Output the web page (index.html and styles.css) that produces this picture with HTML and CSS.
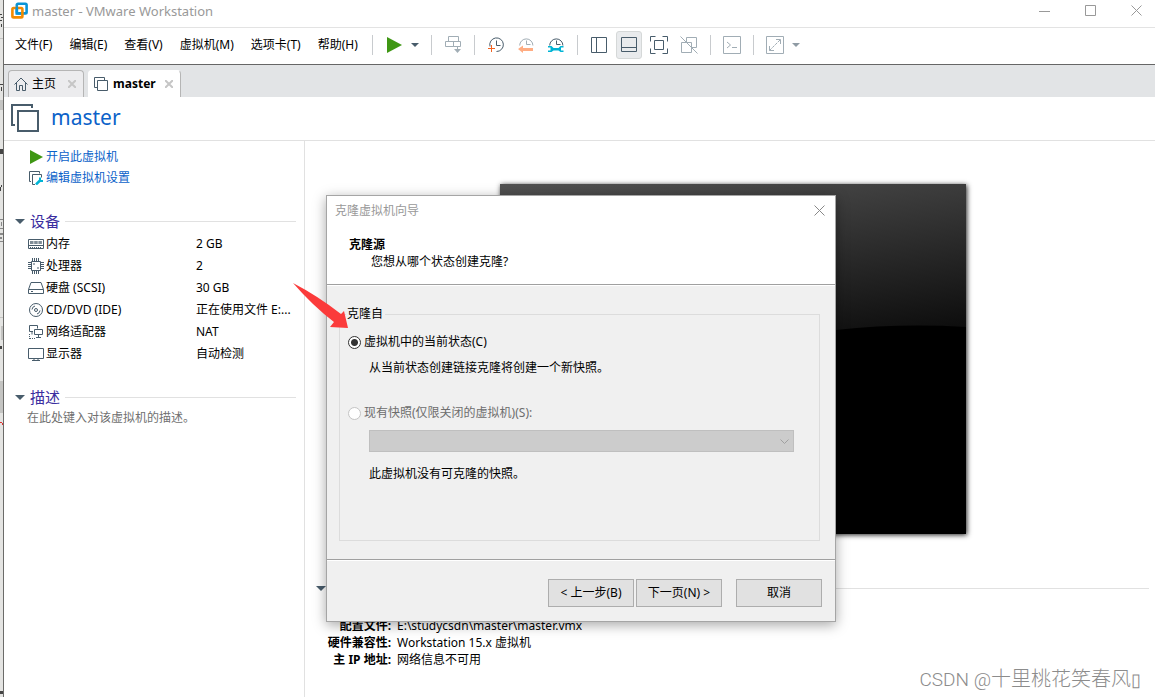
FILE: index.html
```html
<!DOCTYPE html>
<html lang="zh-CN">
<head>
<meta charset="utf-8">
<title>master - VMware Workstation</title>
<link rel="stylesheet" href="styles.css">
</head>
<body>
<div class="desktop">
  <div class="backdrop">
    <svg width="3" height="697" viewBox="0 0 3 697" shape-rendering="crispEdges">
      <path fill="#c4c4c2" d="M0 38h3v1h-3zM0 100h3v10h-3zM0 317h3v1h-3zM1 326h2v14h-2zM0 381h3v32h-3z"/>
      <path fill="#444" d="M0 149h3v5h-3zM0 14h2v1h-2zM1 17h2v1h-2zM0 20h2v1h-2zM1 24h1v3h-1zM0 84h3v1h-3zM1 87h1v4h-1zM0 187h1v4h-1zM1 185h1v2h-1zM0 346h2v3h-2zM0 691h3v3h-3z"/>
      <path fill="#888" d="M0 219h3v1h-3zM1 222h1v4h-1zM0 228h3v1h-3zM0 233h3v2h-3zM0 237h2v2h-2zM0 241h3v1h-3z"/>
      <path fill="#d33" d="M0 422h2v1h-2zM2 423h1v2h-1z"/>
    </svg>
  </div>
  <div class="app">
    <header class="titlebar">
      <svg class="logo" width="18" height="18" viewBox="0 0 18 18" fill="none" stroke-width="2.6">
        <rect x="5.8" y="1.8" width="9.8" height="9.6" rx="1.2" stroke="#0a94d6"/>
        <rect x="1.4" y="6" width="10" height="9.4" rx="1.2" stroke="#f38b00"/>
        <path d="M5.8 5v6.4h4" stroke="#0a94d6"/>
      </svg>
      <h1 class="window-title">master - VMware Workstation</h1>
      <div class="window-controls">
        <button aria-label="最小化"><svg width="12" height="12"><path d="M0 6.500h11"/></svg></button>
        <button aria-label="最大化"><svg width="12" height="12"><path d="M.5.500h10v10h-10z"/></svg></button>
        <button aria-label="关闭"><svg width="12" height="12"><path d="M.5.500l10 10m0-10l-10 10"/></svg></button>
      </div>
    </header>
    <div class="menubar">
      <nav class="menus">
        <button>文件(F)</button><button>编辑(E)</button><button>查看(V)</button><button>虚拟机(M)</button><button>选项卡(T)</button><button>帮助(H)</button>
      </nav>
      <div class="group tight">
        <button class="tool" aria-label="开启"><svg width="16" height="16"><path d="M1 0l15 8-15 8z" fill="#3f9714"/></svg></button>
        <button class="caret" aria-label="电源选项"><svg width="8" height="4"><path d="M0 0h8l-4 4z" fill="#485c6b"/></svg></button>
      </div>
      <div class="group">
        <button class="tool pale" aria-label="发送"><svg width="18" height="18"><path d="M4.500.500h10v5h-10zM1.500 5.500h8v5h-8zM9.500 5.500h7v5h-7zM13.500 10v5"/><path d="M10 13h7l-3.500 4z" fill="#a1adb5" stroke="none"/></svg></button>
      </div>
      <div class="group">
        <button class="tool" aria-label="拍摄快照"><svg width="18" height="18"><path d="M3 10.500a6.800 6.800 0 1 1 6.500 5M9.500 4.500v5h4"/><path d="M1 12.500h7M4.500 9v7" stroke="#f26322"/></svg></button>
        <button class="tool pale" aria-label="恢复快照"><svg width="18" height="18"><path d="M2.700 9.500a6.600 6.600 0 1 1 13.200 0M9.500 4.500v4h4"/><path d="M1 13l5-3.500v2.500h10v3h-10v2z" fill="#ffac82" stroke="none"/></svg></button>
        <button class="tool" aria-label="管理快照"><svg width="18" height="18"><path d="M2.700 9.500a6.600 6.600 0 1 1 13.200 0M9.500 4.500v4h4"/><path d="M1 10h3.500l2 2h5l2-2h3v1.500h-2.500v3h2.500v1.500h-3l-2-1.500h-5l-2 1.500h-3.500v-1.500h2.500v-3h-2.500z" fill="#00b4d5" stroke="none"/></svg></button>
      </div>
      <div class="group">
        <button class="tool" aria-label="显示库"><svg width="18" height="18"><path d="M1.500 1.500h15v15h-15zM6.500 1.500v15"/></svg></button>
        <button class="tool active" aria-label="缩略图栏"><svg width="18" height="18"><path d="M1.500 1.500h15v14h-15zM1.500 11.500h15"/></svg></button>
        <button class="tool" aria-label="全屏"><svg width="18" height="18"><path d="M.500 5.500v-5h5M12.500.500h5v5M17.500 12.500v5h-5M5.500 17.500h-5v-5M4.500 4.500h9v9h-9z"/></svg></button>
        <button class="tool pale" aria-label="Unity"><svg width="18" height="18"><path d="M6.500 1.500h10v10h-5M1.500 6.500h10v10h-10zM6.500 1.500v5M.500.500l17 17"/></svg></button>
      </div>
      <div class="group">
        <button class="tool pale" aria-label="控制台"><svg width="18" height="18"><path d="M.500.500h17v17h-17zM4 6l3.500 3-3.500 3M9 11.500h5"/></svg></button>
      </div>
      <div class="group tight">
        <button class="tool pale" aria-label="拉伸"><svg width="18" height="18"><path d="M.500.500h17v17h-17z"/><path d="M3.500 14.500l11-11" stroke-dasharray="3 1"/><path d="M10 3.500h4.500v4.500M3.500 10v4.500h4.500"/></svg></button>
        <button class="caret" aria-label="拉伸选项"><svg width="8" height="4"><path d="M0 0h8l-4 4z" fill="#8f9ba4"/></svg></button>
      </div>
    </div>
    <div class="tabs">
      <div class="tab">
        <svg width="14" height="14"><path d="M.500 7.500l6.500-6.500 6.500 6.500M2.500 6v7.500h3v-5h3v5h3v-7.500"/></svg>
        <span>主页</span><button aria-label="关闭主页"><svg width="8" height="8"><path d="M0 0l8 8m0-8l-8 8"/></svg></button>
      </div>
      <div class="tab current">
        <svg width="14" height="14"><path d="M3 10.500h-2.500v-10h10v2.500M3.500 3.500h10v10h-10z"/></svg>
        <span>master</span><button aria-label="关闭 master"><svg width="8" height="8"><path d="M0 0l8 8m0-8l-8 8"/></svg></button>
      </div>
    </div>
    <div class="vm-header">
      <svg width="28" height="28" fill="none" stroke="#485c6b" stroke-width="2"><path d="M4 21H1V1h20v3M7 7h20v20H7z"/></svg>
      <h2>master</h2>
    </div>
    <div class="content">
      <aside class="sidebar">
        <div class="actions">
          <a href="#"><svg width="16" height="14"><path d="M2 0l13 7-13 7z" fill="#3f9714"/></svg>开启此虚拟机</a>
          <a href="#"><svg width="16" height="14" fill="none" stroke="#485c6b"><path d="M3 10.500H1.500v-10h10v2M7 13.500H4.500v-10h9v3"/><path d="M8 13.500l4-4" stroke="#00b4d5" stroke-width="2.500"/><path d="M12 6.500v3.500h3" stroke="#00b4d5" stroke-width="2"/></svg>编辑虚拟机设置</a>
        </div>
        <section>
          <h3><svg width="10" height="5"><path d="M0 0h10l-5 5z" fill="#485c6b"/></svg>设备</h3>
          <dl class="devices">
            <div><dt><svg width="16" height="16"><path d="M.500 3.500h15v9h-15zM1 9.500h14"/><path d="M2 6.500h12" stroke-width="3" stroke-dasharray="3.500 .7" opacity=".7"/><path d="M2 11.500h12" stroke-dasharray="1 1"/></svg>内存</dt><dd>2 GB</dd></div>
            <div><dt><svg width="16" height="16"><path d="M3.500 3.500h9v9h-9z"/><path d="M4 1.500h8M4 14.500h8M1.500 4v8M14.500 4v8" stroke-width="3" stroke-dasharray="1 1"/><path d="M5 6h2M9 10h2"/></svg>处理器</dt><dd>2</dd></div>
            <div><dt><svg width="16" height="16"><path d="M3 2.500h10l2.500 7v4h-15v-4zM.500 9.500h15M3 11.500h2"/></svg>硬盘 (SCSI)</dt><dd>30 GB</dd></div>
            <div><dt><svg width="16" height="16"><circle cx="8" cy="8" r="6.500"/><circle cx="8" cy="8" r="1.500"/><path d="M4 7.500a4 4 0 0 1 3-3.500M12 8.500a4 4 0 0 1-3 3.500"/></svg>CD/DVD (IDE)</dt><dd>正在使用文件 E:...</dd></div>
            <div><dt><svg width="16" height="16"><path d="M5 7.500H1.500v-6h8v3M6.500 5.500h8v5h-8zM4 7.500v3M10.500 10.500v3M8 13.500h5"/><path d="M1.500 10v5M2 14.500h6" stroke-dasharray="1 1"/></svg>网络适配器</dt><dd>NAT</dd></div>
            <div><dt><svg width="16" height="16"><path d="M.500 2.500h15v10h-15zM6 13v1.500M4 14.500h8M10 13v1.500"/></svg>显示器</dt><dd>自动检测</dd></div>
          </dl>
        </section>
        <section>
          <h3><svg width="10" height="5"><path d="M0 0h10l-5 5z" fill="#485c6b"/></svg>描述</h3>
          <p class="hint">在此处键入对该虚拟机的描述。</p>
        </section>
      </aside>
      <main class="main">
        <svg class="screen" viewBox="0 0 466 350">
          <defs><linearGradient id="sheen" x1="0" y1="0" x2=".35" y2="1"><stop offset="0" stop-color="#525252"/><stop offset="1" stop-color="#0c0c0c"/></linearGradient></defs>
          <path d="M0 0h466v350H0z"/>
          <path d="M0 0h466v143Q400 139 336 146L0 190z" fill="url(#sheen)"/>
        </svg>
        <div class="details-head"><svg width="10" height="5"><path d="M0 0h10l-5 5z" fill="#485c6b"/></svg></div>
        <dl class="details">
          <dt>配置文件:</dt><dd>E:\studycsdn\master\master.vmx</dd>
          <dt>硬件兼容性:</dt><dd>Workstation 15.x 虚拟机</dd>
          <dt>主 IP 地址:</dt><dd>网络信息不可用</dd>
        </dl>
      </main>
    </div>
  </div>

  <form class="dialog" role="dialog" aria-labelledby="wizard-title">
    <div class="dialog-head">
      <div class="dialog-title"><span id="wizard-title">克隆虚拟机向导</span>
        <button type="button" aria-label="关闭"><svg width="11" height="11"><path d="M.500.500l10 10m0-10l-10 10"/></svg></button></div>
      <h4>克隆源</h4>
      <p>您想从哪个状态创建克隆?</p>
    </div>
    <div class="dialog-body">
      <fieldset>
        <legend>克隆自</legend>
        <label><input type="radio" name="source" checked>虚拟机中的当前状态(C)</label>
        <p class="note">从当前状态创建链接克隆将创建一个新快照。</p>
        <label class="off"><input type="radio" name="source" disabled>现有快照(仅限关闭的虚拟机)(S):</label>
        <div class="select-wrap">
          <select disabled aria-label="现有快照"><option></option></select>
          <svg width="9" height="6"><path d="M.500.500l4 4 4-4"/></svg>
        </div>
        <p class="note">此虚拟机没有可克隆的快照。</p>
      </fieldset>
    </div>
    <div class="dialog-foot">
      <button type="button">&lt; 上一步(B)</button>
      <button type="button">下一页(N) &gt;</button>
      <button type="button" class="cancel">取消</button>
    </div>
  </form>

  <svg class="arrow" width="56" height="46" viewBox="0 0 56 46"><path d="M0 0Q25 13 48 31l3-3 4 17-18-1 4-5Q20 23 0 0z" fill="#fb3b3b"/></svg>
  <div class="watermark"><span class="latin">CSDN @</span>十里桃花笑春风<span class="box">▯</span></div>
</div>
</body>
</html>
```
FILE: styles.css
```css
* { box-sizing: border-box; }
body, h1, h2, h3, h4, p, dl, dd { margin: 0; }
body {
  font: 12px/16px "Noto Sans", "Noto Sans CJK SC", sans-serif;
  color: #000;
  background: #fff;
}
button {
  font: inherit;
  color: inherit;
  background: none;
  border: 0;
  padding: 0;
}
svg { display: block; flex: none; }

.desktop {
  position: relative;
  display: flex;
  min-height: 100vh;
  overflow: hidden;
}
.backdrop {
  flex: none;
  width: 4px;
  background: #e4e4e2;
  border-right: 1px solid #6b6b69;
  overflow: hidden;
  height: 100vh;
}
.app { flex: 1; display: flex; flex-direction: column; min-width: 0; }

.titlebar {
  display: flex;
  align-items: center;
  height: 28px;
  padding: 0 12px 5px 7px;
  border-bottom: 1px solid #e3e3e3;
}
.window-title {
  flex: 1;
  margin-left: 3px;
  font-size: 13px;
  font-weight: 400;
  color: #999;
}
.window-controls { display: flex; gap: 34px; }
.window-controls svg { fill: none; stroke: #999; }

.menubar {
  display: flex;
  align-items: center;
  height: 37px;
  padding: 0 0 2px 11px;
  border-bottom: 1px solid #666;
}
.menus { display: flex; gap: 17px; margin-right: 14px; }
.group {
  position: relative;
  display: flex;
  gap: 4px;
  padding: 0 8px;
}
.group::before {
  content: "";
  width: 1px;
  height: 20px;
  margin: 4px 4px 4px -8px;
  background: #c8cbce;
}
.group.tight { gap: 0; }
.group.tight::before { margin-right: 8px; }
.tool {
  display: grid;
  place-items: center;
  width: 26px;
  height: 28px;
  border: 1px solid transparent;
  border-radius: 3px;
}
.tool svg { fill: none; stroke: #485c6b; }
.tool svg [fill^="#"] { stroke: none; }
.tool.pale svg { stroke: #a1adb5; }
.tool.active { background: #e9ebed; border-color: #d5d8d8; }
.caret { display: grid; place-items: center; width: 16px; }

.tabs {
  display: flex;
  align-items: flex-end;
  gap: 4px;
  height: 32px;
  padding-left: 4px;
  background: #e2e4e6;
}
.tab {
  display: flex;
  align-items: center;
  gap: 4px;
  height: 27px;
  padding: 0 7px 0 5px;
  border: 1px solid #b5b5b5;
  border-bottom: 0;
  border-radius: 4px 4px 0 0;
  background: #ececee;
}
.tab button { margin-left: 8px; }
.tab.current {
  gap: 5px;
  background: #fff;
  border-color: #fff #b5b5b5 #fff #fff;
  font-weight: 700;
}
.tab.current button { margin-left: 4px; }
.tab svg { fill: none; stroke: #485c6b; }
.tab button svg { stroke: #c6c6c6; stroke-width: 2; }

.vm-header {
  display: flex;
  align-items: center;
  gap: 12px;
  height: 44px;
  padding: 0 0 2px 7px;
  border-bottom: 1px solid #e1e1e1;
}
.vm-header h2 {
  padding-bottom: 2px;
  font-size: 21px;
  line-height: 28px;
  font-weight: 400;
  color: #0b62c9;
}

.content { flex: 1; display: flex; }
.sidebar {
  flex: none;
  width: 301px;
  padding: 5px 8px 0 11px;
  border-right: 1px solid #e1e1e1;
}
.actions { padding-left: 13px; margin-bottom: 22px; }
.actions a {
  display: flex;
  align-items: center;
  gap: 2px;
  height: 21px;
  color: #0b62c9;
  text-decoration: none;
}
h3 {
  display: flex;
  align-items: center;
  gap: 5px;
  height: 22px;
  font-size: 15px;
  font-weight: 400;
  color: #3b2ea0;
}
h3::after, .details-head::after {
  content: "";
  flex: 1;
  height: 1px;
  background: #e1e1e1;
}
.devices { margin-bottom: 21px; padding: 1px 0 0 13px; }
.devices div {
  display: grid;
  grid-template-columns: 168px 1fr;
  align-items: center;
  height: 22px;
}
.devices dt { display: flex; align-items: center; gap: 2px; }
.devices dd { white-space: nowrap; }
.devices svg { fill: none; stroke: #485c6b; }
.hint { padding: 2px 0 0 12px; color: #707070; }

.main { flex: 1; min-width: 0; padding: 43px 6px 0 11px; }
.screen {
  width: 466px;
  max-width: 100%;
  margin: 0 auto 44px;
  box-shadow: 1px 1px 5px #222;
}
.details-head { display: flex; align-items: center; gap: 10px; height: 20px; }
.details {
  display: grid;
  grid-template-columns: 75px 1fr;
  column-gap: 6px;
  line-height: 17px;
  padding-top: 19px;
}
.details dt { font-weight: 700; text-align: right; }

.dialog {
  position: absolute;
  left: 326px;
  top: 195px;
  width: 510px;
  border: 1px solid #a5a5a5;
  background: #f0f0f0;
  box-shadow: 0 3px 12px rgba(0, 0, 0, .35);
}
.dialog-head {
  height: 89px;
  padding: 0 10px 0 8px;
  background: #fff;
  border-bottom: 1px solid #a0a0a0;
}
.dialog-title {
  display: flex;
  align-items: center;
  justify-content: space-between;
  height: 29px;
  margin-bottom: 11px;
  color: #999;
}
.dialog-title svg { fill: none; stroke: #888; }
.dialog h4 { padding-left: 14px; font-size: 12px; line-height: 17px; }
.dialog-head p { padding-left: 36px; line-height: 17px; }
.dialog-body {
  padding: 19px 15px 18px 12px;
  border-top: 1px solid #fff;
  border-bottom: 1px solid #a0a0a0;
}
fieldset {
  height: 236px;
  margin: 0;
  padding: 10px 25px 0 8px;
  border: 1px solid #dcdcdc;
}
legend { padding: 0 2px 0 1px; margin-left: -2px; line-height: 18px; }
fieldset label { display: flex; align-items: center; gap: 3px; height: 18px; }
fieldset label.off { color: #6d6d6d; margin-top: 28px; }
fieldset input {
  appearance: none;
  width: 13px;
  height: 13px;
  margin: 0;
  border: 1px solid #333;
  border-radius: 50%;
  background: #fff;
}
fieldset input:checked { background: radial-gradient(circle, #333 3px, #fff 4px); }
fieldset input:disabled { border-color: #c4c4c4; }
.note { padding: 9px 0 0 21px; }
.select-wrap { position: relative; margin: 8px 0 5px 21px; }
select {
  display: block;
  appearance: none;
  width: 100%;
  height: 22px;
  border: 1px solid #bfbfbf;
  border-radius: 0;
  background: #ccc;
  opacity: 1;
}
.select-wrap svg {
  position: absolute;
  right: 5px;
  top: 9px;
  fill: none;
  stroke: #a0a0a0;
}
.dialog-foot {
  display: flex;
  justify-content: flex-end;
  gap: 2px;
  padding: 18px 13px 14px;
  border-top: 1px solid #fff;
}
.dialog-foot button {
  width: 86px;
  height: 28px;
  border: 1px solid #adadad;
  background: #e1e1e1;
}
.dialog-foot .cancel { margin-left: 12px; }

.arrow { position: absolute; left: 293px; top: 283px; }
.watermark {
  position: absolute;
  right: 14px;
  bottom: 4px;
  font: 20px/26px "Noto Sans CJK SC", sans-serif;
  font-weight: 300;
  color: #8c8c8c;
}
.watermark .latin { font-family: Roboto, sans-serif; font-size: 19px; }
.watermark .box { font-size: 18px; }
```
